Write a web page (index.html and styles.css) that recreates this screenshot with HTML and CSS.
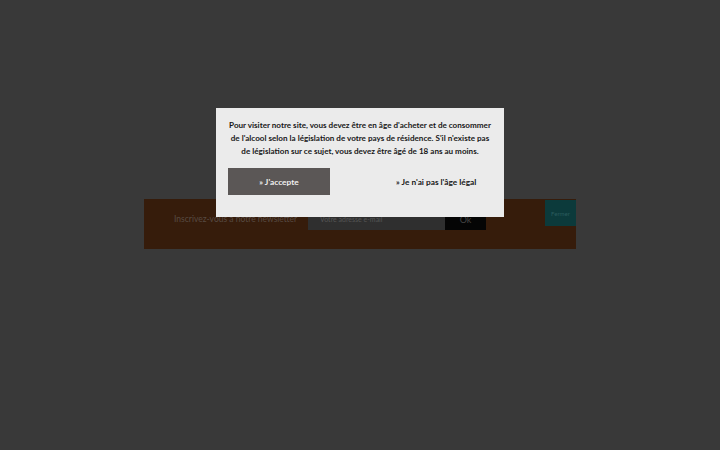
FILE: index.html
```html
<!DOCTYPE html>
<html lang="fr">
<head>
<meta charset="utf-8">
<title>Vérification de l'âge</title>
<link rel="stylesheet" href="styles.css">
</head>
<body>
<div class="page">
  <div class="newsletter">
    <span class="nl-label">Inscrivez-vous à notre newsletter</span>
    <form class="nl-form">
      <input class="nl-input" type="text" placeholder="Votre adresse e-mail">
      <button class="nl-ok" type="button">Ok</button>
    </form>
    <div class="nl-tab">Fermer</div>
  </div>
</div>
<div class="overlay">
  <div class="modal">
    <p class="modal-text">Pour visiter notre site, vous devez être en âge d'acheter et de consommer<br>de l'alcool selon la législation de votre pays de résidence. S'il n'existe pas<br>de législation sur ce sujet, vous devez être âgé de 18 ans au moins.</p>
    <div class="modal-actions">
      <button class="btn btn-accept" type="button">» J'accepte</button>
      <button class="btn btn-refuse" type="button">» Je n'ai pas l'âge légal</button>
    </div>
  </div>
</div>
</body>
</html>
```

FILE: styles.css
```css
html, body {
  margin: 0;
  padding: 0;
  height: 100%;
}
body {
  background: #393939;
  font-family: Lato, "Noto Sans", sans-serif;
  overflow: hidden;
}
.page {
  padding-top: 199px;
}
.newsletter {
  width: 432px;
  height: 50px;
  margin: 0 auto;
  background: #361c0b;
  display: flex;
  align-items: flex-start;
  box-sizing: border-box;
  padding-left: 30px;
}
.nl-label {
  margin-top: 15px;
  font-size: 8.5px;
  color: #574a42;
  white-space: nowrap;
  width: 134px;
}
.nl-form {
  display: flex;
  margin: 9px 0 0 0;
}
.nl-input {
  width: 137px;
  height: 22px;
  box-sizing: border-box;
  border: 0;
  background: #2f2f2f;
  color: #666;
  font-family: inherit;
  font-size: 7px;
  padding: 0 12px;
  outline: none;
}
.nl-input::placeholder {
  color: #555;
}
.nl-ok {
  width: 41px;
  height: 22px;
  border: 0;
  background: #050505;
  color: #444;
  font-family: inherit;
  font-size: 9px;
  padding: 0;
}
.nl-tab {
  margin-left: auto;
  margin-top: 1px;
  width: 31px;
  height: 26px;
  background: #0c3a3b;
  color: #2b5c5d;
  font-size: 6px;
  display: flex;
  align-items: center;
  justify-content: center;
}
.overlay {
  position: absolute;
  left: 0;
  top: 0;
  width: 100%;
  display: flex;
  justify-content: center;
  padding-top: 108px;
}
.modal {
  width: 288px;
  height: 109px;
  box-sizing: border-box;
  background: #ebebeb;
  padding: 11px 12px 0 12px;
}
.modal-text {
  margin: 0 -6px;
  font-size: 8.1px;
  line-height: 13px;
  font-weight: 700;
  color: #181818;
  text-align: center;
  white-space: nowrap;
}
.modal-actions {
  display: flex;
  margin-top: 10px;
  align-items: center;
}
.btn {
  border: 0;
  font-family: inherit;
  font-weight: 700;
  font-size: 8.3px;
  padding: 0;
  height: 27px;
}
.btn-accept {
  width: 102px;
  background: #5b5756;
  color: #f0f0f0;
}
.btn-refuse {
  background: transparent;
  color: #181818;
  flex: 1;
  padding-left: 66px;
  text-align: left;
}
```
